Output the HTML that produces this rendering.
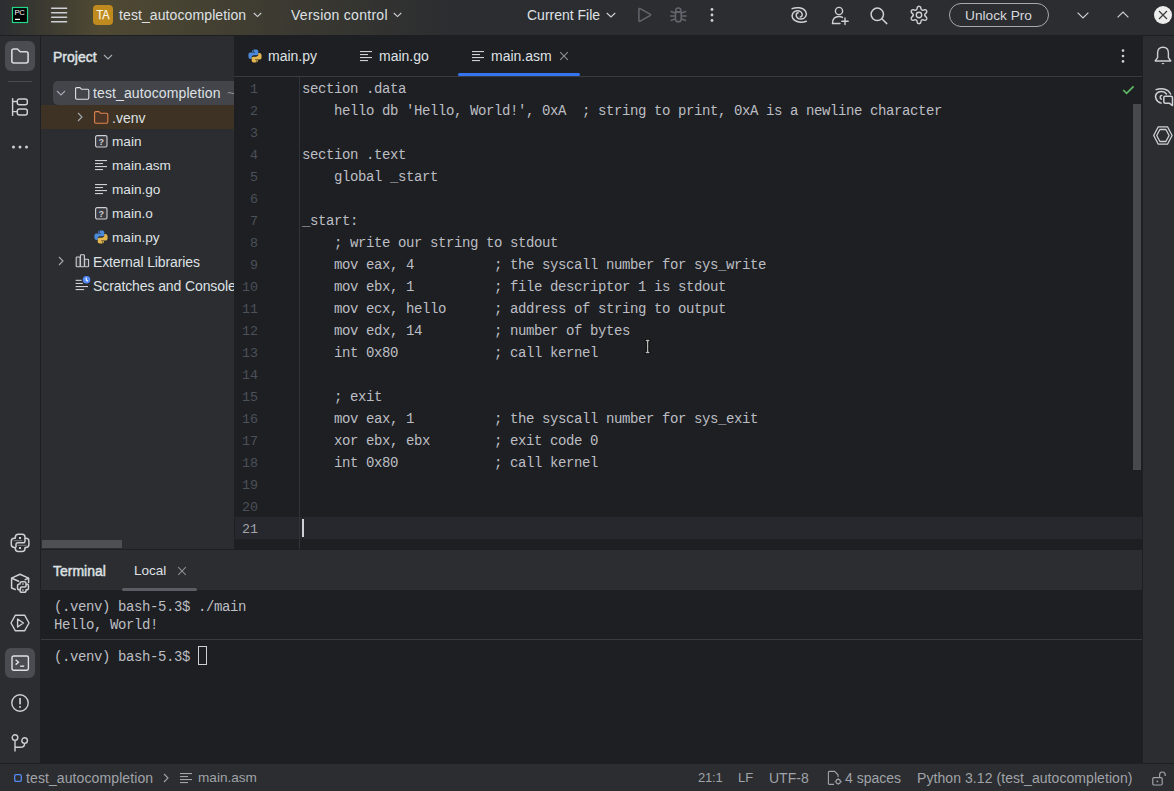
<!DOCTYPE html>
<html><head><meta charset="utf-8">
<style>
*{margin:0;padding:0;box-sizing:border-box}
html,body{width:1174px;height:791px;overflow:hidden;background:#2B2D30;font-family:"Liberation Sans",sans-serif;color:#DFE1E5}
.a{position:absolute}
.t{position:absolute;white-space:pre;font-size:14px;line-height:16px}
.m{font-family:"Liberation Mono",monospace}
svg{position:absolute;overflow:visible}
#title{left:0;top:0;width:1174px;height:35px;background:#2B2D30}
#grad{left:0;top:0;width:110px;height:35px;background:linear-gradient(to right,rgba(190,160,60,0) 0px,rgba(190,160,60,0.25) 100px,rgba(190,160,60,0.25))}
#grad2{left:110px;top:0;width:1064px;height:35px;background:radial-gradient(circle 350px at -10px 17px,rgba(190,160,60,0.25),rgba(190,160,60,0.12) 50%,rgba(190,160,60,0) 100%)}
.hl{height:1px;background:#1E1F22}
.vl{width:1px;background:#1E1F22}
.code{font-family:"Liberation Mono",monospace;font-size:14px;letter-spacing:-0.4px;color:#BCBEC4;white-space:pre;line-height:22px}
.ln{font-family:"Liberation Mono",monospace;font-size:13.333px;color:#4B5059;white-space:pre;line-height:22px;text-align:right;width:24px}
</style></head><body>
<!-- TITLE BAR -->
<div id="title" class="a"></div>
<div id="grad" class="a"></div><div id="grad2" class="a"></div>
<div class="a hl" style="left:0;top:35px;width:1174px"></div>

<!-- TITLE CONTENT -->
<svg style="left:12px;top:7px" width="16" height="16" viewBox="0 0 16 16"><rect x="0.5" y="0.5" width="15" height="15" fill="#000" stroke="#21D789" stroke-width="1.2"/><text x="2.6" y="8.2" font-family="Liberation Sans" font-size="7.6" fill="#fff" letter-spacing="-0.5">PC</text><rect x="3" y="11.8" width="5" height="1.2" fill="#fff"/></svg>
<svg style="left:51px;top:7px" width="16" height="16" viewBox="0 0 16 16"><g stroke="#CED0D6" stroke-width="1.5" stroke-linecap="round"><line x1="0.6" y1="1.3" x2="15.6" y2="1.3"/><line x1="0.6" y1="5.8" x2="15.6" y2="5.8"/><line x1="0.6" y1="10.3" x2="15.6" y2="10.3"/><line x1="0.6" y1="14.8" x2="15.6" y2="14.8"/></g></svg>
<div class="a" style="left:93px;top:5px;width:20px;height:20px;border-radius:4px;background:#BF8B1E"></div>
<div class="t" style="left:93px;top:7px;width:20px;text-align:center;font-size:12.5px;color:#FBF3E4;-webkit-text-stroke:0.25px #FBF3E4;transform:scaleX(0.87)">TA</div>
<div class="t" style="left:119px;top:7px;letter-spacing:0.1px">test_autocompletion</div>
<svg style="left:253px;top:12px" width="9" height="6" viewBox="0 0 9 6"><path d="M0.8 1 L4.5 4.6 L8.2 1" fill="none" stroke="#CED0D6" stroke-width="1.1"/></svg>
<div class="t" style="left:291px;top:7px;letter-spacing:0.28px">Version control</div>
<svg style="left:393px;top:12px" width="9" height="6" viewBox="0 0 9 6"><path d="M0.8 1 L4.5 4.6 L8.2 1" fill="none" stroke="#CED0D6" stroke-width="1.1"/></svg>
<div class="t" style="left:527px;top:7px">Current File</div>
<svg style="left:606px;top:12px" width="10" height="6" viewBox="0 0 10 6"><path d="M0.8 1 L5 5 L9.2 1" fill="none" stroke="#CED0D6" stroke-width="1.2"/></svg>
<svg style="left:637px;top:7px" width="16" height="16" viewBox="0 0 16 16"><path d="M1.9 2.4 Q1.9 0.9 3.2 1.7 L13 7.2 Q14.1 7.9 13 8.6 L3.2 14.2 Q1.9 15 1.9 13.5 Z" fill="none" stroke="#63666C" stroke-width="1.5" stroke-linejoin="round"/></svg>
<svg style="left:670px;top:7px" width="17" height="16" viewBox="0 0 17 16"><g fill="none" stroke="#63666C" stroke-width="1.5" stroke-linecap="round"><path d="M5.6 4.8 Q5.6 1.1 8.35 1.1 Q11.1 1.1 11.1 4.8 Z"/><path d="M5.5 7.2 Q5.5 5.1 7.5 5.1 H9.2 Q11.2 5.1 11.2 7.2 V11.9 Q11.2 14.8 8.35 14.8 Q5.5 14.8 5.5 11.9 Z"/><path d="M5 6 L1.2 4.5 M5 9 H0.6 M5 12 L1.2 13.4 M11.7 6 L15.5 4.5 M11.7 9 H16.1 M11.7 12 L15.5 13.4"/></g></svg>
<svg style="left:704px;top:7px" width="16" height="16" viewBox="0 0 16 16"><g fill="#CED0D6"><circle cx="8" cy="2.5" r="1.4"/><circle cx="8" cy="8" r="1.4"/><circle cx="8" cy="13.5" r="1.4"/></g></svg>
<svg style="left:786px;top:3px" width="26" height="24" viewBox="0 0 26 24"><g fill="none" stroke="#CED0D6" stroke-width="1.5" stroke-linecap="round"><path d="M6.1 5.6 C10 4 17 4.2 19.6 8.4 C21.5 11.6 19.5 15.6 15.5 16 C12.5 16.3 10 14.5 10.2 12 C10.3 10.6 11.2 9.8 12.2 9.8"/><path d="M20.3 18.2 C16.4 19.8 9.4 19.6 6.8 15.4 C4.9 12.2 6.9 8.2 10.9 7.8 C13.9 7.5 16.4 9.3 16.2 11.8 C16.1 13.2 15.2 14 14.2 14"/></g></svg>
<svg style="left:831px;top:6px" width="19" height="19" viewBox="0 0 19 19"><g fill="none" stroke="#CED0D6" stroke-width="1.4" stroke-linecap="round"><circle cx="8" cy="5" r="3.6"/><path d="M1.5 17.5 C1.5 12.5 4.5 10.5 8 10.5 C9.5 10.5 10.5 10.8 11.5 11.4"/><path d="M1.5 17.5 H9"/><path d="M14 12 V18.5 M10.8 15.2 H17.2"/></g></svg>
<svg style="left:870px;top:7px" width="18" height="18" viewBox="0 0 18 18"><g fill="none" stroke="#CED0D6" stroke-width="1.5" stroke-linecap="round"><circle cx="7.3" cy="7.3" r="6.2"/><path d="M11.8 11.8 L16.8 16.6"/></g></svg>
<svg style="left:910px;top:6px" width="18" height="18" viewBox="0 0 18 18"><g fill="none" stroke="#CED0D6" stroke-width="1.4" stroke-linejoin="round"><path d="M9.00 0.30 L9.45 0.36 L9.89 0.53 L10.30 0.81 L10.65 1.23 L10.86 2.05 L11.00 2.86 L11.19 3.30 L11.39 3.63 L11.61 3.88 L11.85 4.06 L12.13 4.18 L12.46 4.24 L12.84 4.25 L13.32 4.20 L14.09 3.91 L14.90 3.69 L15.44 3.78 L15.89 3.99 L16.26 4.29 L16.53 4.65 L16.71 5.07 L16.78 5.53 L16.74 6.03 L16.55 6.55 L15.95 7.14 L15.32 7.66 L15.03 8.04 L14.85 8.39 L14.74 8.70 L14.70 9.00 L14.74 9.30 L14.85 9.61 L15.03 9.96 L15.32 10.34 L15.95 10.86 L16.55 11.45 L16.74 11.97 L16.78 12.47 L16.71 12.93 L16.53 13.35 L16.26 13.71 L15.89 14.01 L15.44 14.22 L14.90 14.31 L14.09 14.09 L13.32 13.80 L12.84 13.75 L12.46 13.76 L12.13 13.82 L11.85 13.94 L11.61 14.12 L11.39 14.37 L11.19 14.70 L11.00 15.14 L10.86 15.95 L10.65 16.77 L10.30 17.19 L9.89 17.47 L9.45 17.64 L9.00 17.70 L8.55 17.64 L8.11 17.47 L7.70 17.19 L7.35 16.77 L7.14 15.95 L7.00 15.14 L6.81 14.70 L6.61 14.37 L6.39 14.12 L6.15 13.94 L5.87 13.82 L5.54 13.76 L5.16 13.75 L4.68 13.80 L3.91 14.09 L3.10 14.31 L2.56 14.22 L2.11 14.01 L1.74 13.71 L1.47 13.35 L1.29 12.93 L1.22 12.47 L1.26 11.97 L1.45 11.45 L2.05 10.86 L2.68 10.34 L2.97 9.96 L3.15 9.61 L3.26 9.30 L3.30 9.00 L3.26 8.70 L3.15 8.39 L2.97 8.04 L2.68 7.66 L2.05 7.14 L1.45 6.55 L1.26 6.03 L1.22 5.53 L1.29 5.07 L1.47 4.65 L1.74 4.29 L2.11 3.99 L2.56 3.78 L3.10 3.69 L3.91 3.91 L4.68 4.20 L5.16 4.25 L5.54 4.24 L5.87 4.18 L6.15 4.06 L6.39 3.88 L6.61 3.63 L6.81 3.30 L7.00 2.86 L7.14 2.05 L7.35 1.23 L7.70 0.81 L8.11 0.53 L8.55 0.36 Z"/><circle cx="9" cy="9" r="2.7"/></g></svg>
<div class="a" style="left:949px;top:3px;width:100px;height:24px;border:1.8px solid #A6A9AF;border-radius:12px"></div>
<div class="t" style="left:965px;top:8px;font-size:13.7px;color:#D5D7DC">Unlock Pro</div>
<svg style="left:1077px;top:12px" width="12" height="7" viewBox="0 0 12 7"><path d="M0.6 0.6 L6 6 L11.4 0.6" fill="none" stroke="#CED0D6" stroke-width="1.2"/></svg>
<svg style="left:1117px;top:11px" width="12" height="7" viewBox="0 0 12 7"><path d="M0.6 6.4 L6 1 L11.4 6.4" fill="none" stroke="#CED0D6" stroke-width="1.2"/></svg>
<svg style="left:1154px;top:6px" width="18" height="18" viewBox="0 0 18 18"><circle cx="9" cy="9" r="9" fill="#EDEDED"/><path d="M5 5 L13 13 M13 5 L5 13" stroke="#3C3C3C" stroke-width="1.2"/></svg>

<!-- LEFT STRIP -->
<div class="a" style="left:0;top:36px;width:40px;height:727px;background:#2B2D30"></div>
<div class="a vl" style="left:40px;top:36px;height:727px"></div>

<!-- PROJECT PANEL -->

<div class="a" style="left:41px;top:36px;width:193px;height:513px;background:#2B2D30"></div>

<!-- PROJECT CONTENT -->
<div class="t" style="left:53px;top:49px;font-size:14px;color:#DFE1E5;-webkit-text-stroke:0.45px #DFE1E5">Project</div>
<svg style="left:103px;top:54px" width="10" height="6" viewBox="0 0 10 6"><path d="M1 1 L5 5 L9 1" fill="none" stroke="#A8ADB5" stroke-width="1.1"/></svg>
<div class="a" style="left:53px;top:81px;width:181px;height:24px;border-radius:5px 0 0 5px;background:#43454A"></div>
<svg style="left:56px;top:90px" width="10" height="6" viewBox="0 0 10 6"><path d="M1 1 L5 5 L9 1" fill="none" stroke="#A8ADB5" stroke-width="1.1"/></svg>
<svg style="left:75px;top:87px" width="15" height="13" viewBox="0 0 15 13"><path d="M0.6 1.8 Q0.6 0.6 1.8 0.6 H5 L6.6 2.3 H12.6 Q13.8 2.3 13.8 3.5 V11 Q13.8 12.2 12.6 12.2 H1.8 Q0.6 12.2 0.6 11 Z" fill="none" stroke="#DFE1E5" stroke-width="1.1" stroke-linejoin="round"/></svg>
<div class="t" style="left:93px;top:85px;letter-spacing:0.12px">test_autocompletion</div>
<div class="t" style="left:227px;top:85px;color:#8C8F94">~</div>
<div class="a" style="left:41px;top:105px;width:193px;height:24px;background:#3D3223"></div>
<svg style="left:77px;top:112px" width="6" height="10" viewBox="0 0 6 10"><path d="M1 1 L5 5 L1 9" fill="none" stroke="#A8ADB5" stroke-width="1.1"/></svg>
<svg style="left:94px;top:111px" width="15" height="13" viewBox="0 0 15 13"><path d="M0.6 1.8 Q0.6 0.6 1.8 0.6 H5 L6.6 2.3 H12.6 Q13.8 2.3 13.8 3.5 V11 Q13.8 12.2 12.6 12.2 H1.8 Q0.6 12.2 0.6 11 Z" fill="#4A3526" stroke="#E0834E" stroke-width="1.1" stroke-linejoin="round"/></svg>
<div class="t" style="left:112px;top:110px">.venv</div>
<svg style="left:95px;top:135px" width="13" height="13" viewBox="0 0 13 13"><rect x="0.6" y="0.6" width="11.4" height="11.4" rx="1.5" fill="#393B40" stroke="#CED0D6" stroke-width="1.1"/><text x="6.3" y="9.6" text-anchor="middle" font-family="Liberation Sans" font-size="9" font-weight="bold" fill="#CED0D6">?</text></svg>
<div class="t" style="left:112px;top:134px;font-size:13.6px">main</div>
<svg style="left:95px;top:160px" width="13" height="11" viewBox="0 0 13 11"><g fill="#CED0D6"><rect x="0" y="0" width="12" height="1.1"/><rect x="0" y="3" width="8" height="1.1"/><rect x="0" y="6" width="12" height="1.1"/><rect x="0" y="9" width="8" height="1.1"/></g></svg>
<div class="t" style="left:112px;top:158px;font-size:13.6px">main.asm</div>
<svg style="left:95px;top:184px" width="13" height="11" viewBox="0 0 13 11"><g fill="#CED0D6"><rect x="0" y="0" width="12" height="1.1"/><rect x="0" y="3" width="8" height="1.1"/><rect x="0" y="6" width="12" height="1.1"/><rect x="0" y="9" width="8" height="1.1"/></g></svg>
<div class="t" style="left:112px;top:182px;font-size:13.6px">main.go</div>
<svg style="left:95px;top:207px" width="13" height="13" viewBox="0 0 13 13"><rect x="0.6" y="0.6" width="11.4" height="11.4" rx="1.5" fill="#393B40" stroke="#CED0D6" stroke-width="1.1"/><text x="6.3" y="9.6" text-anchor="middle" font-family="Liberation Sans" font-size="9" font-weight="bold" fill="#CED0D6">?</text></svg>
<div class="t" style="left:112px;top:206px;font-size:13.6px">main.o</div>
<svg style="left:94px;top:230px" width="14" height="14" viewBox="0 0 14 14"><path d="M6.9 0.4 C4 0.4 4.2 1.7 4.2 1.7 V3.1 H7 V3.5 H2.3 C0.4 3.5 0.4 5.4 0.4 7.1 C0.4 8.9 1.2 10 2.7 10 H3.7 V8.4 C3.7 6.9 4.9 6.3 6.2 6.3 H8.9 C10.1 6.3 10.3 5.4 10.3 4.6 V1.9 C10.3 1 9.5 0.4 6.9 0.4 Z" fill="#4C8AD9"/><circle cx="5.5" cy="1.9" r="0.55" fill="#1E1F22"/><path d="M7.1 13.6 C10 13.6 9.8 12.3 9.8 12.3 V10.9 H7 V10.5 H11.7 C13.6 10.5 13.6 8.6 13.6 6.9 C13.6 5.1 12.8 4 11.3 4 H10.3 V5.6 C10.3 7.1 9.1 7.7 7.8 7.7 H5.1 C3.9 7.7 3.7 8.6 3.7 9.4 V12.1 C3.7 13 4.5 13.6 7.1 13.6 Z" fill="#E2B54D"/><circle cx="8.5" cy="12.1" r="0.55" fill="#1E1F22"/></svg>
<div class="t" style="left:112px;top:230px;font-size:13.6px">main.py</div>
<svg style="left:58px;top:256px" width="6" height="10" viewBox="0 0 6 10"><path d="M1 1 L5 5 L1 9" fill="none" stroke="#A8ADB5" stroke-width="1.1"/></svg>
<svg style="left:75px;top:254px" width="15" height="14" viewBox="0 0 15 14"><g fill="#393B40" stroke="#CED0D6" stroke-width="1.1"><rect x="1.2" y="3" width="4" height="9.8" rx="0.8"/><rect x="5.4" y="0.8" width="4" height="12" rx="0.8"/><rect x="9.6" y="5.2" width="4" height="7.6" rx="0.8"/></g></svg>
<div class="t" style="left:93px;top:254px;letter-spacing:-0.12px">External Libraries</div>
<svg style="left:75px;top:275px" width="16" height="16" viewBox="0 0 16 16"><g fill="#CED0D6"><rect x="0.6" y="4.8" width="6" height="1.1"/><rect x="0.6" y="7.9" width="7.3" height="1.1"/><rect x="0.6" y="11" width="12.4" height="1.1"/><rect x="0.6" y="14" width="8.5" height="1.1"/></g><circle cx="11.5" cy="4.8" r="3.8" fill="#548AF7"/><path d="M11.2 2.6 V5 L12.8 6.2" fill="none" stroke="#FFFFFF" stroke-width="1.1"/></svg>
<div class="t" style="left:93px;top:278px;letter-spacing:-0.1px">Scratches and Consoles</div>
<div class="a" style="left:42px;top:540px;width:80px;height:8px;background:#4D4F53"></div>

<!-- LEFT STRIP ICONS -->
<div class="a" style="left:5px;top:41px;width:30px;height:30px;border-radius:6px;background:#4A4C51"></div>
<svg style="left:11px;top:48px" width="18" height="16" viewBox="0 0 18 16"><path d="M0.85 2.9 Q0.85 1 2.7 1 H6.4 L9.2 3.8 H15.2 Q17.1 3.8 17.1 5.7 V13.1 Q17.1 15 15.2 15 H2.7 Q0.85 15 0.85 13.1 Z" fill="none" stroke="#D6D8DD" stroke-width="1.6" stroke-linejoin="round"/></svg>
<div class="a" style="left:8px;top:81px;width:24px;height:1px;background:#4A4C51"></div>
<svg style="left:11px;top:97px" width="18" height="20" viewBox="0 0 18 20"><g fill="none" stroke="#CED0D6" stroke-width="1.45"><path d="M1.6 1.1 V18.9"/><path d="M1.6 4.4 H6.3 M1.6 14.6 H6.3"/><rect x="6.3" y="2" width="10" height="5.8" rx="2"/><rect x="6.3" y="12" width="10" height="6" rx="2"/></g></svg>
<svg style="left:11px;top:144px" width="18" height="6" viewBox="0 0 18 6"><g fill="#CED0D6"><circle cx="2.5" cy="3" r="1.5"/><circle cx="9" cy="3" r="1.5"/><circle cx="15.5" cy="3" r="1.5"/></g></svg>
<svg style="left:8px;top:531px" width="24" height="24" viewBox="0 0 24 24"><g fill="none" stroke="#CED0D6" stroke-width="1.5" stroke-linejoin="round"><path d="M10.3 3.3 H14 Q17 3.3 17 6.3 V7.3 H18 Q20.9 7.3 20.9 10.3 V13.6 Q20.9 16.5 18 16.5 H17 V17.6 Q17 20.6 14 20.6 H10.3 Q7.3 20.6 7.3 17.6 V16.5 H6.3 Q3.3 16.5 3.3 13.6 V10.3 Q3.3 7.3 6.3 7.3 H7.3 V6.3 Q7.3 3.3 10.3 3.3 Z"/><path d="M17 7.3 V10 Q17 11.8 15.2 11.8 H9.8 Q8 11.8 8 13.6 V16.5"/></g><path d="M5.6 9.7 H14.3 M9.7 14.3 H18.5" stroke="#7A7D83" stroke-width="1"/><g fill="#CED0D6"><rect x="11" y="6" width="2" height="2"/><rect x="11" y="16" width="2" height="2"/></g></svg>
<svg style="left:8px;top:571px" width="24" height="24" viewBox="0 0 24 24"><g fill="none" stroke="#CED0D6" stroke-width="1.5" stroke-linejoin="round" stroke-linecap="round"><path d="M7.3 18.5 L3.6 17 V7.1 L12 3.3 L20.6 7.1 V11.5"/><path d="M3.8 7.2 L10.6 10.3 M17.2 8.6 L20.4 7.2"/></g><g transform="translate(15 16) scale(0.62) translate(-12.1 -11.95)" fill="none" stroke="#CED0D6" stroke-width="2.4" stroke-linejoin="round"><path d="M10.3 3.3 H14 Q17 3.3 17 6.3 V7.3 H18 Q20.9 7.3 20.9 10.3 V13.6 Q20.9 16.5 18 16.5 H17 V17.6 Q17 20.6 14 20.6 H10.3 Q7.3 20.6 7.3 17.6 V16.5 H6.3 Q3.3 16.5 3.3 13.6 V10.3 Q3.3 7.3 6.3 7.3 H7.3 V6.3 Q7.3 3.3 10.3 3.3 Z" fill="#2B2D30"/><path d="M17 7.3 V10 Q17 11.8 15.2 11.8 H9.8 Q8 11.8 8 13.6 V16.5"/></g><g fill="#CED0D6"><rect x="14.2" y="12.3" width="1.4" height="1.4"/><rect x="14.2" y="18.4" width="1.4" height="1.4"/></g></svg>
<svg style="left:10px;top:614px" width="20" height="18" viewBox="0 0 20 18"><g fill="none" stroke="#CED0D6" stroke-width="1.4" stroke-linejoin="round"><path d="M5.4 1.2 H14.6 L19 9 L14.6 16.8 H5.4 L1 9 Z"/><path d="M7.6 5 L13.4 9 L7.6 13 Z"/></g></svg>
<div class="a" style="left:5px;top:648px;width:30px;height:30px;border-radius:6px;background:#4A4C51"></div>
<svg style="left:11px;top:655px" width="18" height="16" viewBox="0 0 18 16"><g fill="none" stroke="#DFE1E5" stroke-width="1.4"><rect x="1" y="1" width="16.4" height="14.2" rx="1.6"/><path d="M4.6 4.8 L7.6 7.2 L4.6 9.6" stroke-linejoin="round"/><path d="M9.2 11.2 H13.2"/></g></svg>
<svg style="left:11px;top:694px" width="18" height="18" viewBox="0 0 18 18"><g fill="none" stroke="#CED0D6" stroke-width="1.4"><circle cx="9" cy="9" r="8.2"/></g><rect x="8.2" y="4" width="1.7" height="6.4" fill="#CED0D6"/><rect x="8.2" y="12" width="1.7" height="1.8" fill="#CED0D6"/></svg>
<svg style="left:10px;top:734px" width="20" height="18" viewBox="0 0 20 18"><g fill="none" stroke="#CED0D6" stroke-width="1.4"><circle cx="5" cy="3.6" r="2.8"/><circle cx="14.6" cy="6.6" r="2.8"/><path d="M5 6.4 V17.6 M5 13.2 H10.5 Q14.6 13.2 14.6 9.4"/></g></svg>

<!-- EDITOR -->
<div class="a" style="left:234px;top:36px;width:908px;height:513px;background:#1E1F22"></div>
<div class="a" style="left:234px;top:76px;width:908px;height:1px;background:#393B40"></div>

<!-- EDITOR CONTENT -->
<svg style="left:248px;top:49px" width="14" height="14" viewBox="0 0 14 14"><path d="M6.9 0.4 C4 0.4 4.2 1.7 4.2 1.7 V3.1 H7 V3.5 H2.3 C0.4 3.5 0.4 5.4 0.4 7.1 C0.4 8.9 1.2 10 2.7 10 H3.7 V8.4 C3.7 6.9 4.9 6.3 6.2 6.3 H8.9 C10.1 6.3 10.3 5.4 10.3 4.6 V1.9 C10.3 1 9.5 0.4 6.9 0.4 Z" fill="#4C8AD9"/><circle cx="5.5" cy="1.9" r="0.55" fill="#1E1F22"/><path d="M7.1 13.6 C10 13.6 9.8 12.3 9.8 12.3 V10.9 H7 V10.5 H11.7 C13.6 10.5 13.6 8.6 13.6 6.9 C13.6 5.1 12.8 4 11.3 4 H10.3 V5.6 C10.3 7.1 9.1 7.7 7.8 7.7 H5.1 C3.9 7.7 3.7 8.6 3.7 9.4 V12.1 C3.7 13 4.5 13.6 7.1 13.6 Z" fill="#E2B54D"/><circle cx="8.5" cy="12.1" r="0.55" fill="#1E1F22"/></svg>
<div class="t" style="left:268px;top:48px">main.py</div>
<svg style="left:360px;top:51px" width="13" height="11" viewBox="0 0 13 11"><g fill="#CED0D6"><rect x="0" y="0" width="12" height="1.1"/><rect x="0" y="3" width="8" height="1.1"/><rect x="0" y="6" width="12" height="1.1"/><rect x="0" y="9" width="8" height="1.1"/></g></svg>
<div class="t" style="left:379px;top:48px">main.go</div>
<svg style="left:472px;top:51px" width="13" height="11" viewBox="0 0 13 11"><g fill="#CED0D6"><rect x="0" y="0" width="12" height="1.1"/><rect x="0" y="3" width="8" height="1.1"/><rect x="0" y="6" width="12" height="1.1"/><rect x="0" y="9" width="8" height="1.1"/></g></svg>
<div class="t" style="left:491px;top:48px">main.asm</div>
<svg style="left:559px;top:51px" width="10" height="10" viewBox="0 0 10 10"><path d="M1.2 1.2 L8.8 8.8 M8.8 1.2 L1.2 8.8" stroke="#8C8F94" stroke-width="1.1"/></svg>
<div class="a" style="left:458px;top:73px;width:122px;height:3px;border-radius:1.5px;background:#3574F0"></div>
<svg style="left:1115px;top:48px" width="16" height="16" viewBox="0 0 16 16"><g fill="#CED0D6"><circle cx="8" cy="2.6" r="1.3"/><circle cx="8" cy="8" r="1.3"/><circle cx="8" cy="13.4" r="1.3"/></g></svg>
<div class="a" style="left:235px;top:517px;width:907px;height:22px;background:#26282E"></div>
<div class="a" style="left:299px;top:77px;width:1px;height:472px;background:#313338"></div>
<div class="a ln" style="left:234px;top:79px">1
2
3
4
5
6
7
8
9
10
11
12
13
14
15
16
17
18
19
20</div>
<div class="a ln" style="left:234px;top:519px;color:#A1A3AB">21</div>
<div class="a code" style="left:302px;top:78px">section .data
    hello db &#x27;Hello, World!&#x27;, 0xA  ; string to print, 0xA is a newline character

section .text
    global _start

_start:
    ; write our string to stdout
    mov eax, 4          ; the syscall number for sys_write
    mov ebx, 1          ; file descriptor 1 is stdout
    mov ecx, hello      ; address of string to output
    mov edx, 14         ; number of bytes
    int 0x80            ; call kernel

    ; exit
    mov eax, 1          ; the syscall number for sys_exit
    xor ebx, ebx        ; exit code 0
    int 0x80            ; call kernel


</div>
<div class="a" style="left:302px;top:519px;width:2px;height:18px;background:#CED0D6"></div>
<svg style="left:1122px;top:85px" width="13" height="10" viewBox="0 0 13 10"><path d="M1.2 5 L4.6 8.4 L11.6 1.4" fill="none" stroke="#5FB865" stroke-width="1.7"/></svg>
<div class="a" style="left:1133px;top:104px;width:8px;height:366px;background:#48494C"></div>
<svg style="left:643px;top:337px" width="9" height="19" viewBox="0 0 9 19"><path d="M4.6 3.5 V15.5 M3.3 3.5 H5.9 M3.3 15.5 H5.9" fill="none" stroke="#000" stroke-width="3.2" stroke-linecap="round"/><path d="M4.6 3.5 V15.5 M3.3 3.5 H5.9 M3.3 15.5 H5.9" fill="none" stroke="#B8B8B8" stroke-width="1.4" stroke-linecap="round"/></svg>

<!-- TERMINAL -->
<div class="a hl" style="left:41px;top:549px;width:1101px"></div>
<div class="a" style="left:41px;top:550px;width:1101px;height:40px;background:#2B2D30"></div>
<div class="a" style="left:41px;top:590px;width:1101px;height:173px;background:#1E1F22"></div>

<!-- TERMINAL CONTENT -->
<div class="t" style="left:53px;top:563px;font-size:14px;color:#DFE1E5;-webkit-text-stroke:0.45px #DFE1E5">Terminal</div>
<div class="t" style="left:134px;top:563px;font-size:13.5px;color:#DFE1E5">Local</div>
<svg style="left:177px;top:566px" width="10" height="10" viewBox="0 0 10 10"><path d="M1.2 1.2 L8.8 8.8 M8.8 1.2 L1.2 8.8" stroke="#8C8F94" stroke-width="1.1"/></svg>
<div class="a" style="left:122px;top:588px;width:75px;height:3px;border-radius:1.5px;background:#5A5D63"></div>
<div class="a m" style="left:54px;top:598px;font-size:14px;letter-spacing:-0.4px;line-height:18px;white-space:pre;color:#BCBEC4">(.venv) bash-5.3$ ./main
Hello, World!</div>
<div class="a" style="left:41px;top:639px;width:1101px;height:1px;background:#393B40"></div>
<div class="a m" style="left:54px;top:648px;font-size:14px;letter-spacing:-0.4px;line-height:18px;white-space:pre;color:#BCBEC4">(.venv) bash-5.3$</div>
<div class="a" style="left:198px;top:646px;width:9px;height:19px;border:1px solid #CED0D6"></div>

<!-- RIGHT STRIP -->
<div class="a" style="left:1143px;top:36px;width:31px;height:727px;background:#2B2D30"></div>
<div class="a vl" style="left:1142px;top:36px;height:727px"></div>

<!-- RIGHT STRIP ICONS -->
<svg style="left:1154px;top:46px" width="18" height="19" viewBox="0 0 18 19"><g fill="none" stroke="#CED0D6" stroke-width="1.4" stroke-linejoin="round"><path d="M9 1.2 Q3.6 1.2 3.6 7 V11.6 L1.2 15 H16.8 L14.4 11.6 V7 Q14.4 1.2 9 1.2 Z"/></g><path d="M7.3 17 H10.7 L9 18.5 Z" fill="#CED0D6"/></svg>
<svg style="left:1150px;top:84px" width="24" height="24" viewBox="0 0 24 24"><g fill="none" stroke="#CED0D6" stroke-width="1.5" stroke-linecap="round" stroke-linejoin="round"><path d="M6.1 5.6 C10.5 4 17.5 4.2 20.6 10"/><path d="M16.4 10 C14.5 7 9 6.6 6.6 9.5 C4.5 12 5.5 17.5 11.2 19.1"/><path d="M11.8 11.4 C10 11.5 9.5 13.8 11.2 15.2"/><path d="M15.3 12.2 H21 Q22.5 12.2 22.5 13.7 V21.6 L19.6 19.3 H15.3 Q13.8 19.3 13.8 17.8 V13.7 Q13.8 12.2 15.3 12.2 Z"/></g></svg>
<svg style="left:1150px;top:124px" width="24" height="24" viewBox="0 0 24 24"><g fill="none" stroke="#CED0D6" stroke-width="1.3" stroke-linejoin="round"><path d="M3.7 11.5 L8.3 2.8 H17.5 L22.1 11.5 L17.5 20.2 H8.3 Z"/><path d="M6.7 11.5 L9.9 5.5 H15.9 L19.1 11.5 L15.9 17.5 H9.9 Z"/></g></svg>

<!-- STATUS BAR -->
<div class="a hl" style="left:0;top:763px;width:1174px"></div>
<div class="a" style="left:0;top:764px;width:1174px;height:27px;background:#2B2D30"></div>

<!-- STATUS CONTENT -->
<svg style="left:14px;top:774px" width="8" height="8" viewBox="0 0 8 8"><rect x="0.7" y="0.7" width="6.6" height="6.6" rx="1.2" fill="none" stroke="#548AF7" stroke-width="1.3"/></svg>
<div class="t" style="left:26px;top:770px;color:#A0A3A9;letter-spacing:0.1px">test_autocompletion</div>
<svg style="left:163px;top:773px" width="6" height="10" viewBox="0 0 6 10"><path d="M1 1 L5 5 L1 9" fill="none" stroke="#A0A3A9" stroke-width="1.1"/></svg>
<svg style="left:180px;top:773px" width="13" height="11" viewBox="0 0 13 11"><g fill="#A0A3A9"><rect x="0" y="0" width="12" height="1.1"/><rect x="0" y="3" width="8" height="1.1"/><rect x="0" y="6" width="12" height="1.1"/><rect x="0" y="9" width="8" height="1.1"/></g></svg>
<div class="t" style="left:198px;top:770px;color:#A0A3A9;font-size:13.6px">main.asm</div>
<div class="t" style="left:698px;top:770px;color:#A0A3A9;font-size:13px;letter-spacing:-0.2px">21:1</div>
<div class="t" style="left:738px;top:770px;color:#A0A3A9;font-size:13px">LF</div>
<div class="t" style="left:769px;top:770px;color:#A0A3A9">UTF-8</div>
<svg style="left:827px;top:770px" width="16" height="16" viewBox="0 0 16 16"><g fill="none" stroke="#A0A3A9" stroke-width="1.1"><path d="M7 14.4 H2.4 Q1.4 14.4 1.4 13.4 V2.4 Q1.4 1.4 2.4 1.4 H7.6 L11 4.8 V7"/><circle cx="11.2" cy="11.6" r="2.2"/><path d="M11.2 8.2 V9 M11.2 14.2 V15 M7.8 11.6 H8.6 M13.8 11.6 H14.6"/></g></svg>
<div class="t" style="left:845px;top:770px;color:#A0A3A9">4 spaces</div>
<div class="t" style="left:917px;top:770px;color:#A0A3A9;letter-spacing:0.07px">Python 3.12 (test_autocompletion)</div>
<svg style="left:1152px;top:771px" width="15" height="15" viewBox="0 0 15 15"><g fill="none" stroke="#A0A3A9" stroke-width="1.2"><rect x="0.8" y="6.6" width="9.4" height="7.4" rx="1.2"/><path d="M7.6 6.6 V4 Q7.6 1 10.4 1 Q13.2 1 13.2 4 V5"/></g><rect x="4.6" y="9.6" width="1.6" height="1.6" fill="#A0A3A9"/></svg>
</body></html>
